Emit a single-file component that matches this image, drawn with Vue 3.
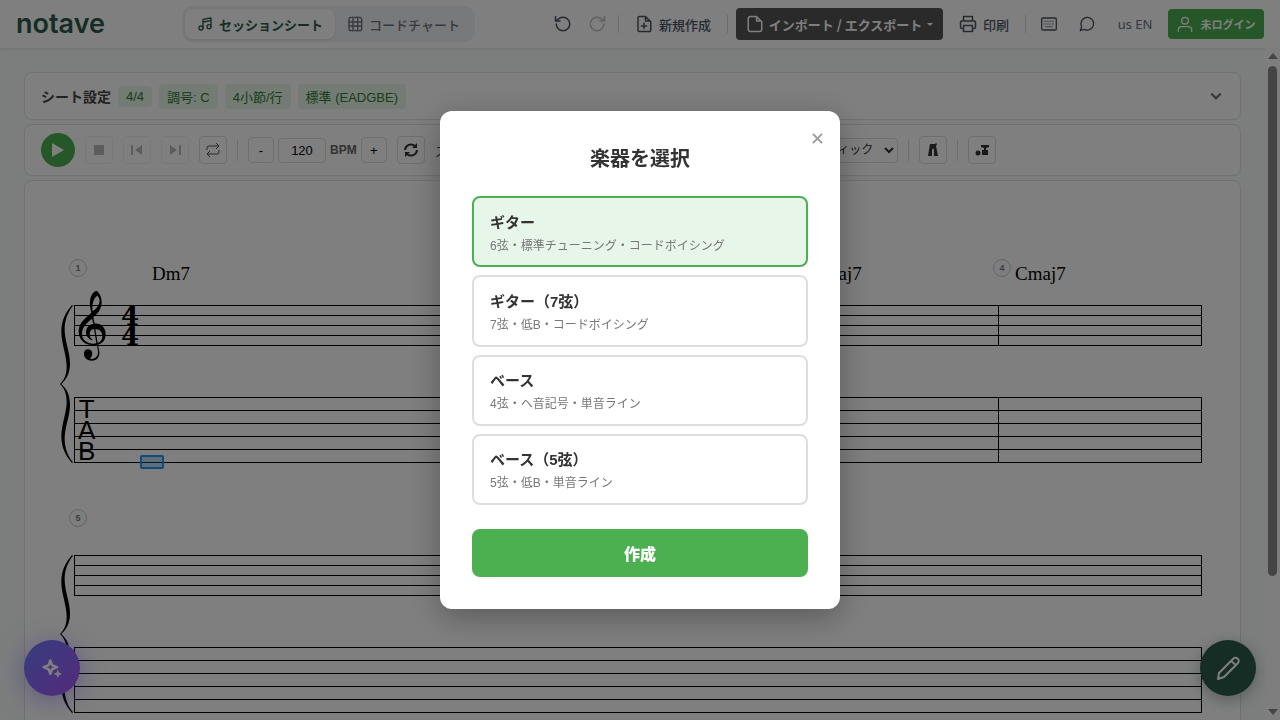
<script setup>
import { ref } from 'vue'

const bpm = ref(120)
const swing = ref(50)
const tone = ref('acoustic')
const showPicker = ref(true)
const selected = ref('guitar')

const chips = ['4/4', '調号: C', '4小節/行', '標準 (EADGBE)']

const systems = [
  {
    measures: [
      { number: 1, chord: 'Dm7' },
      { number: 2, chord: 'G7' },
      { number: 3, chord: 'Cmaj7' },
      { number: 4, chord: 'Cmaj7' }
    ]
  },
  { measures: [{ number: 5, chord: '' }] }
]

const instruments = [
  { id: 'guitar', name: 'ギター', detail: '6弦・標準チューニング・コードボイシング' },
  { id: 'guitar7', name: 'ギター（7弦）', detail: '7弦・低B・コードボイシング' },
  { id: 'bass', name: 'ベース', detail: '4弦・ヘ音記号・単音ライン' },
  { id: 'bass5', name: 'ベース（5弦）', detail: '5弦・低B・単音ライン' }
]

const changeBpm = (step) => {
  bpm.value = Number(bpm.value) + step
}
</script>

<template>
  <div class="app">
    <header class="header">
      <a href="#" class="logo">notave</a>

      <nav class="tabs">
        <button class="tab active">
          <svg class="icon" viewBox="0 0 24 24"><path d="M9 18V5l12-2v13M9 9l12-2" /><circle cx="6" cy="18" r="3" /><circle cx="18" cy="16" r="3" /></svg>
          セッションシート
        </button>
        <button class="tab">
          <svg class="icon" viewBox="0 0 24 24"><rect x="3" y="2" width="19" height="20" rx="3" /><path d="M3 9h19M3 15h19M9 2v20M16 2v20" /></svg>
          コードチャート
        </button>
      </nav>

      <div class="actions">
        <button class="icon-action" aria-label="元に戻す">
          <svg class="icon large" viewBox="0 0 24 24"><path d="M3 12a9 9 0 1 0 9-9 9.75 9.75 0 0 0-6.74 2.74L2 8M2 2v6h6" /></svg>
        </button>
        <button class="icon-action" disabled aria-label="やり直す">
          <svg class="icon large" viewBox="0 0 24 24"><path d="M21 12a9 9 0 1 1-9-9 9.75 9.75 0 0 1 6.74 2.74L22 8M22 2v6h-6" /></svg>
        </button>
        <span class="divider after-history"></span>
        <button class="text-action">
          <svg class="icon large" viewBox="0 0 24 24"><path d="M14 2v6h6M18 22H6a2 2 0 0 1-2-2V4a2 2 0 0 1 2-2h8l7 7v11a2 2 0 0 1-3 2zM12 11v7M8.500 14.500h7" /></svg>
          新規作成
        </button>
        <span class="divider"></span>
        <button class="export-button">
          <svg class="icon large" viewBox="0 0 24 24"><path d="M14 2v6h6M18 22H6a3 3 0 0 1-3-3V5a3 3 0 0 1 3-3h8l7 7v10a3 3 0 0 1-3 3z" /></svg>
          インポート / エクスポート
          <span class="caret"></span>
        </button>
        <button class="text-action print">
          <svg class="icon large" viewBox="0 0 24 24"><path d="M6 8V2h12v6M6 18H4a2 2 0 0 1-2-2v-6a2 2 0 0 1 2-2h16a2 2 0 0 1 2 2v6a2 2 0 0 1-2 2h-2M6 14h12v8H6z" /></svg>
          印刷
        </button>
        <span class="divider before-help"></span>
        <button class="icon-action wide" aria-label="キーボード">
          <svg class="icon" viewBox="0 0 24 24"><rect x="1" y="3" width="22" height="18" rx="2" /><path class="keys" d="M5 8h2M9 8h2M13 8h2M17 8h2M5 12h2M9 12h2M13 12h2M17 12h2M7 16h10" /></svg>
        </button>
        <button class="icon-action wide" aria-label="フィードバック">
          <svg class="icon" viewBox="0 0 24 24"><path d="M2 22l2-6a9.500 9.500 0 1 1 4 4z" /></svg>
        </button>
        <button class="language">us EN</button>
        <button class="login">
          <svg class="icon" viewBox="0 0 24 24"><circle cx="12" cy="7" r="5" /><path d="M2 23v-2a5 5 0 0 1 5-5h10a5 5 0 0 1 5 5v2" /></svg>
          未ログイン
        </button>
      </div>
    </header>

    <div class="body">
      <main class="content">
        <section class="card settings">
          <h2 class="settings-title">シート設定</h2>
          <span v-for="chip in chips" :key="chip" class="chip">{{ chip }}</span>
          <button class="expand" aria-label="開く">
            <svg viewBox="0 0 12 12"><path d="M2 4l4 4 4-4" /></svg>
          </button>
        </section>

        <section class="card player">
          <button class="play" aria-label="再生">
            <svg viewBox="0 0 12 14"><path d="M0 0l12 7-12 7z" /></svg>
          </button>
          <button class="tool" disabled aria-label="停止">
            <svg viewBox="0 0 16 16"><path d="M3 3h10v10H3z" /></svg>
          </button>
          <button class="tool" disabled aria-label="前へ">
            <svg viewBox="0 0 16 16"><path d="M2 3h2v10H2zM13 3v10L6 8z" /></svg>
          </button>
          <button class="tool" disabled aria-label="次へ">
            <svg viewBox="0 0 16 16"><path d="M12 3h2v10h-2zM3 3v10l7-5z" /></svg>
          </button>
          <button class="tool" aria-label="リピート">
            <svg class="outline" viewBox="0 0 16 16"><path d="M2 8V6a2 2 0 0 1 2-2h10M11 1l3 3-3 3M14 8v2a2 2 0 0 1-2 2H2M5 15l-3-3 3-3" /></svg>
          </button>
          <span class="separator"></span>
          <div class="tempo">
            <button class="step" @click="changeBpm(-1)">-</button>
            <input id="bpm" v-model="bpm" type="text" class="bpm-input" />
            <label for="bpm" class="bpm-label">BPM</label>
            <button class="step" @click="changeBpm(1)">+</button>
          </div>
          <button class="tool dark" aria-label="同期">
            <svg class="outline bold" viewBox="0 0 16 16"><path d="M2 8a6 6 0 0 1 10-4l1 1M14 8a6 6 0 0 1-10 4l-1-1" /><path class="solid" d="M14 1v5H9zM2 15v-5h5z" /></svg>
          </button>
          <div class="swing">
            <label for="swing">スウィング</label>
            <input id="swing" v-model="swing" type="range" />
          </div>
          <select v-model="tone" class="tone" aria-label="音色">
            <option value="acoustic">アコースティック</option>
            <option value="electric">エレキ</option>
          </select>
          <span class="separator"></span>
          <button class="tool dark" aria-label="メトロノーム">
            <svg viewBox="0 0 16 16"><path d="M5 2h5l1-1 1 1-1 2 2 10H9V8L8 6 7 8v6H3z" /></svg>
          </button>
          <span class="separator"></span>
          <button class="tool dark" aria-label="ドラム">
            <svg viewBox="0 0 16 16"><circle cx="4" cy="11" r="2.500" /><path d="M7 3h8v2l-3 1v2h2v5H8V8h2V6L7 5z" /></svg>
          </button>
        </section>

        <section class="card sheet">
          <div v-for="(system, index) in systems" :key="index" class="system">
            <svg class="brace" viewBox="0 0 42 474">
              <path d="M36 0C14 25 4 50 4 80 4 115 20 150 20 185 20 210 12 225 0 237 12 249 20 264 20 289 20 324 4 359 4 394 4 424 14 449 36 474L39 472C24 454 14 429 14 402 14 364 30 334 30 299 30 269 20 252 4 237 20 222 30 205 30 175 30 140 14 110 14 72 14 45 24 20 39 2Z" />
            </svg>
            <div class="measures">
              <div v-for="(measure, i) in system.measures" :key="measure.number" class="measure" :class="{ opening: index === 0 && i === 0 }">
                <div class="measure-head">
                  <span class="number">{{ measure.number }}</span>
                  <span class="chord">{{ measure.chord }}</span>
                </div>
                <div class="staff">
                  <template v-if="index === 0 && i === 0">
                    <svg class="clef" viewBox="0 0 87 213">
                      <path d="M43 165C18 165 2 148 2 124 2 100 20 86 40 68 36 52 35 44 36 32 38 16 46 4 56 2 66 10 71 22 71 36 71 56 60 70 46 82L50 101C70 99 83 114 83 133 83 150 74 160 60 164L64 185C66 202 55 212 41 212 26 212 18 202 18 192 18 182 24 178 31 178 46 180 46 198 36 206 48 210 62 200 60 184L57 165ZM44 64C52 58 61 50 64 38 66 30 64 22 58 17 46 24 41 45 44 64ZM42 86C24 101 12 112 12 132 12 150 28 161 46 161 49 161 52 161 55 160L48 117C40 118 35 124 35 132 35 140 38 146 44 149L43 151C30 147 24 137 24 127 24 114 32 104 46 101ZM52 117L59 159C68 156 73 149 73 139 73 126 65 117 52 117Z" />
                    </svg>
                    <div class="time"><span>4</span><span>4</span></div>
                  </template>
                </div>
                <div class="tab-staff">
                  <template v-if="index === 0 && i === 0">
                    <div class="tab-clef"><span>T</span><span>A</span><span>B</span></div>
                    <span class="cursor"></span>
                  </template>
                </div>
              </div>
            </div>
          </div>
        </section>
      </main>

      <div class="scrollbar">
        <span class="arrow up"></span>
        <span class="thumb"></span>
        <span class="arrow down"></span>
      </div>
    </div>

    <button class="fab assistant" aria-label="AI">
      <svg viewBox="0 0 24 24"><path d="M10 3l2 5.500L18 11l-6 2.500L10 19l-2-5.500L2 11l6-2.500z" /><path class="star" d="M19 15l1 3 3 1-3 1-1 3-1-3-3-1 3-1z" /></svg>
    </button>
    <button class="fab edit" aria-label="編集">
      <svg viewBox="0 0 24 24"><path d="M17 3a3 3 0 0 1 5 4L8 21l-6 2 1-6zM15 5l5 4" /></svg>
    </button>

    <div v-if="showPicker" class="overlay">
      <div class="modal" role="dialog" aria-labelledby="picker-title">
        <button class="close" aria-label="閉じる" @click="showPicker = false">
          <svg viewBox="0 0 12 12"><path d="M1 1l10 10M11 1L1 11" /></svg>
        </button>
        <h2 id="picker-title" class="modal-title">楽器を選択</h2>
        <div class="options">
          <button
            v-for="item in instruments"
            :key="item.id"
            class="option"
            :class="{ selected: selected === item.id }"
            @click="selected = item.id"
          >
            <span class="option-name">{{ item.name }}</span>
            <span class="option-detail">{{ item.detail }}</span>
          </button>
        </div>
        <button class="create" @click="showPicker = false">作成</button>
      </div>
    </div>
  </div>
</template>

<style>
body {
  margin: 0;
}
</style>

<style scoped>
.app {
  height: 100vh;
  display: flex;
  flex-direction: column;
  overflow: hidden;
  background: #f8fcfa;
  color: #333;
  font-family: "Liberation Sans", "Noto Sans CJK JP", sans-serif;
}

.app * {
  box-sizing: border-box;
}

button,
input,
select {
  font-family: inherit;
  margin: 0;
}

button {
  display: flex;
  align-items: center;
  justify-content: center;
  flex: none;
  padding: 0;
  border: none;
  background: none;
  white-space: nowrap;
  cursor: pointer;
}

.header {
  display: flex;
  align-items: center;
  flex: none;
  height: 48px;
  padding: 0 16px;
  background: #fff;
  box-shadow: 0 1px 3px rgba(45, 90, 74, 0.15);
  font-family: "Noto Sans CJK JP", sans-serif;
}

.logo {
  width: 166px;
  color: #2d5a4a;
  font-family: Inter, sans-serif;
  font-size: 27px;
  font-weight: 600;
  line-height: 32px;
  text-decoration: none;
}

.tabs {
  display: flex;
  padding: 3px;
  border-radius: 10px;
  background: #f1f3f6;
}

.tab {
  gap: 6px;
  height: 30px;
  padding: 0 12px;
  border-radius: 8px;
  color: #6b7280;
  font-family: inherit;
  font-size: 13px;
  font-weight: 500;
}

.tab.active {
  background: #fff;
  color: #2d5a4a;
  font-weight: 600;
  box-shadow: 0 1px 3px rgba(0, 0, 0, 0.1);
}

.icon {
  width: 16px;
  height: 16px;
  fill: none;
  stroke: currentColor;
  stroke-width: 2;
  stroke-linecap: round;
  stroke-linejoin: round;
}

.icon.large {
  width: 18px;
  height: 18px;
}

.keys {
  stroke-width: 1;
}

.actions {
  display: flex;
  align-items: center;
  margin-left: auto;
}

.icon-action {
  width: 34px;
  height: 32px;
  color: #4b5563;
}

.icon-action.wide {
  width: 38px;
}

.icon-action:disabled {
  opacity: 0.35;
}

.divider {
  width: 1px;
  height: 18px;
  margin: 0 8px;
  background: #d5d9de;
}

.divider.after-history {
  margin-left: 4px;
}

.divider.before-help {
  margin-right: 4px;
}

.text-action {
  gap: 6px;
  padding: 0 8px;
  color: #4b5563;
  font-size: 13px;
  font-weight: 500;
}

.text-action.print {
  margin-left: 8px;
}

.export-button {
  gap: 5px;
  width: 207px;
  height: 32px;
  border-radius: 4px;
  background: #555;
  color: #fff;
  font-size: 13px;
  font-weight: 600;
}

.caret {
  border: 3px solid transparent;
  border-top-color: #fff;
  border-bottom: none;
}

.language {
  width: 58px;
  color: #6b7280;
  font-family: "Noto Sans", sans-serif;
  font-size: 13px;
}

.login {
  gap: 8px;
  width: 96px;
  height: 30px;
  margin-left: 4px;
  border-radius: 4px;
  background: #4caf50;
  color: #fff;
  font-size: 11px;
  font-weight: 700;
}

.body {
  display: flex;
  flex: 1;
  min-height: 0;
}

.content {
  display: flex;
  flex: 1;
  flex-direction: column;
  gap: 4px;
  min-width: 0;
  padding: 24px 24px 0;
  overflow: hidden;
}

.card {
  display: flex;
  align-items: center;
  flex: none;
  padding: 0 16px;
  border: 1px solid #e0e2e1;
  border-radius: 8px;
  background: #fff;
}

.settings {
  gap: 7px;
  height: 48px;
}

.settings-title {
  margin: 0;
  color: #444;
  font-size: 14px;
  font-weight: 600;
}

.chip {
  padding: 3px 8px;
  border-radius: 4px;
  background: #e8f5e9;
  color: #2e7d32;
  font-size: 13px;
}

.expand {
  width: 16px;
  height: 16px;
  margin-left: auto;
}

.expand svg {
  width: 14px;
  fill: none;
  stroke: #777;
  stroke-width: 2;
}

.player {
  gap: 10px;
  height: 52px;
}

.play {
  width: 34px;
  height: 34px;
  border-radius: 50%;
  background: #4caf50;
}

.play svg {
  width: 12px;
  height: 14px;
  fill: #fff;
}

.tool {
  width: 28px;
  height: 28px;
  border: 1px solid #ddd;
  border-radius: 4px;
  color: #555;
}

.tool svg {
  width: 16px;
  height: 16px;
  fill: currentColor;
}

.tool:disabled {
  opacity: 0.4;
}

.tool.dark {
  color: #333;
}

.tool .outline {
  fill: none;
  stroke: currentColor;
  stroke-width: 1;
}

.tool .bold {
  stroke-width: 2;
}

.tool .solid {
  fill: currentColor;
  stroke: none;
}

.separator {
  width: 1px;
  height: 22px;
  background: #ddd;
}

.tempo {
  display: flex;
  align-items: center;
  gap: 4px;
}

.step {
  width: 26px;
  height: 26px;
  border: 1px solid #ddd;
  border-radius: 4px;
  color: #000;
  font-size: 13px;
}

.bpm-input {
  width: 48px;
  height: 25px;
  padding: 0;
  border: 1px solid #ddd;
  border-radius: 4px;
  font-size: 13px;
  text-align: center;
}

.bpm-label {
  color: #666;
  font-size: 12px;
  font-weight: 600;
}

.swing {
  display: flex;
  align-items: center;
  gap: 8px;
  width: 329px;
  color: #444;
  font-size: 13px;
}

.swing input {
  width: 120px;
}

.tone {
  width: 124px;
  height: 25px;
  border: 1px solid #ddd;
  border-radius: 4px;
  background: #fff;
  color: #333;
  font-size: 12px;
}

.sheet {
  display: block;
  height: 1000px;
  padding: 78px 38px 0 35px;
  color: #000;
}

.system {
  display: flex;
  height: 250px;
}

.brace {
  flex: none;
  width: 14px;
  height: 158px;
  margin-top: 46px;
}

.measures {
  display: flex;
  flex: 1;
}

.measure {
  flex: 204;
}

.measure.opening {
  flex: 516;
}

.measure-head {
  display: flex;
  align-items: flex-start;
  gap: 4px;
  height: 46px;
  margin-left: -5px;
}

.opening .measure-head {
  gap: 65px;
}

.number {
  width: 18px;
  height: 18px;
  border: 1px solid #c4ced8;
  border-radius: 50%;
  background: #fcfdfe;
  color: #777f8a;
  font-size: 9px;
  font-weight: 700;
  line-height: 16px;
  text-align: center;
}

.chord {
  padding-top: 4px;
  font-family: "Liberation Serif", serif;
  font-size: 19px;
  line-height: 22px;
}

.staff,
.tab-staff {
  display: flex;
  align-items: center;
  border-left: 1px solid #000;
}

.measure:last-child .staff,
.measure:last-child .tab-staff {
  border-right: 1px solid #000;
}

.staff {
  height: 41px;
  margin-bottom: 51px;
  padding-left: 3px;
  background: repeating-linear-gradient(#000 0 1px, transparent 1px 10px);
}

.tab-staff {
  position: relative;
  height: 66px;
  padding-left: 3px;
  background: repeating-linear-gradient(#000 0 1px, transparent 1px 13px);
}

.clef {
  flex: none;
  width: 29px;
  height: 71px;
}

.time {
  display: flex;
  flex-direction: column;
  margin-left: 14px;
  font-family: "DejaVu Serif", serif;
  font-size: 26px;
  font-weight: 700;
  line-height: 20px;
}

.tab-clef {
  display: flex;
  flex-direction: column;
  align-items: center;
  font-size: 26px;
  line-height: 21px;
}

.cursor {
  position: absolute;
  left: 65px;
  bottom: -6px;
  width: 24px;
  height: 14px;
  border: 2px solid #2196f3;
  border-radius: 2px;
  background: rgba(33, 150, 243, 0.3);
}

.scrollbar {
  display: flex;
  flex-direction: column;
  align-items: center;
  width: 15px;
  padding: 5px 0 5px;
  background: #fcfcfc;
}

.thumb {
  flex: 0 0 77%;
  width: 9px;
  margin-top: 7px;
  border-radius: 5px;
  background: #8b8b8b;
}

.arrow {
  border: 5px solid transparent;
}

.arrow.up {
  border-top: none;
  border-bottom: 6px solid #8b8b8b;
}

.arrow.down {
  margin-top: auto;
  border-bottom: none;
  border-top: 6px solid #8b8b8b;
}

.fab {
  position: fixed;
  bottom: 24px;
  width: 56px;
  height: 56px;
  border-radius: 50%;
}

.fab svg {
  width: 24px;
  height: 24px;
  fill: none;
  stroke: #fff;
  stroke-width: 2;
  stroke-linejoin: round;
}

.assistant {
  left: 24px;
  background: linear-gradient(135deg, #6c7bff, #a855f7);
  box-shadow: 0 4px 28px rgba(124, 92, 255, 0.5);
}

.assistant svg {
  width: 20px;
  height: 20px;
  stroke-width: 3;
}

.assistant .star {
  fill: #fff;
  stroke-width: 1;
}

.edit {
  right: 24px;
  background: #2d5a4a;
  box-shadow: 0 4px 16px rgba(45, 90, 74, 0.4);
}

.overlay {
  position: fixed;
  inset: 0;
  display: flex;
  align-items: center;
  justify-content: center;
  background: rgba(0, 0, 0, 0.5);
}

.modal {
  position: relative;
  width: 400px;
  padding: 32px;
  border-radius: 12px;
  background: #fff;
  box-shadow: 0 8px 32px rgba(0, 0, 0, 0.3);
}

.close {
  position: absolute;
  top: 16px;
  right: 12px;
  width: 22px;
  height: 22px;
}

.close svg {
  width: 11px;
  height: 11px;
  stroke: #999;
  stroke-width: 2;
}

.modal-title {
  margin: 0 0 20px;
  font-size: 20px;
  font-weight: 600;
  line-height: 33px;
  text-align: center;
}

.options {
  display: grid;
  grid-auto-rows: 1fr;
  gap: 8px;
  height: 309px;
  margin-bottom: 24px;
}

.option {
  flex-direction: column;
  align-items: flex-start;
  gap: 3px;
  padding: 3px 16px 0;
  border: 2px solid #ddd;
  border-radius: 8px;
  background: #fff;
}

.option.selected {
  border-color: #4caf50;
  background: #e8f5e9;
}

.option-name {
  color: #333;
  font-size: 15px;
  font-weight: 600;
  line-height: 22px;
}

.option-detail {
  color: #777;
  font-size: 12px;
  line-height: 18px;
}

.create {
  width: 100%;
  height: 48px;
  border-radius: 8px;
  background: #4caf50;
  color: #fff;
  font-size: 16px;
  font-weight: 900;
}
</style>
